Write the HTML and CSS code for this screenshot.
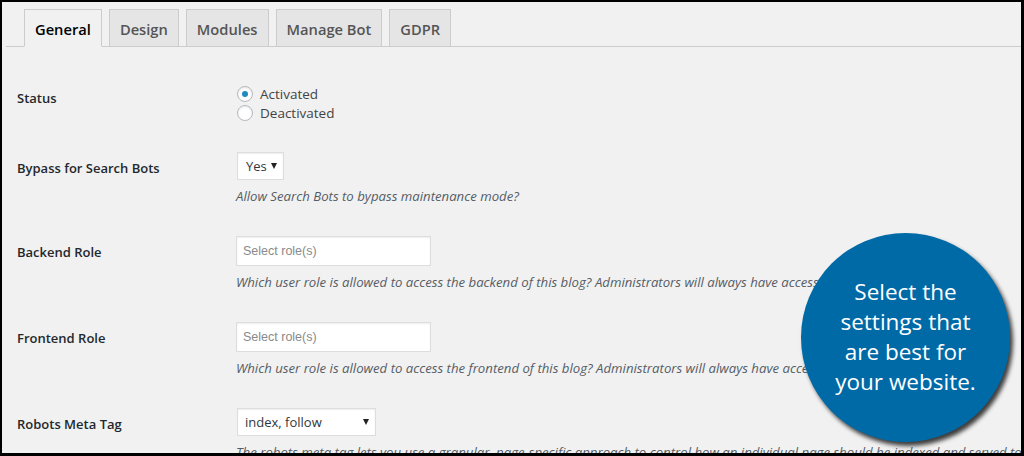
FILE: index.html
```html
<!DOCTYPE html>
<html lang="en">
<head>
<meta charset="utf-8">
<title>Settings</title>
<link rel="stylesheet" href="styles.css">
</head>
<body>
<div class="page">
  <nav class="tabs">
    <span class="tab active">General</span>
    <span class="tab">Design</span>
    <span class="tab">Modules</span>
    <span class="tab">Manage Bot</span>
    <span class="tab">GDPR</span>
  </nav>

  <div class="form">
    <div class="row">
      <div class="label">Status</div>
      <div class="field">
        <label class="radio"><span class="dot checked"></span>Activated</label>
        <label class="radio"><span class="dot"></span>Deactivated</label>
      </div>
    </div>

    <div class="row">
      <div class="label label-input">Bypass for Search Bots</div>
      <div class="field">
        <div class="select select-yes"><span>Yes</span><span class="caret"></span></div>
        <p class="desc">Allow Search Bots to bypass maintenance mode?</p>
      </div>
    </div>

    <div class="row">
      <div class="label label-input">Backend Role</div>
      <div class="field">
        <div class="input">Select role(s)</div>
        <p class="desc">Which user role is allowed to access the backend of this blog? Administrators will always have access to the backend.</p>
      </div>
    </div>

    <div class="row">
      <div class="label label-input">Frontend Role</div>
      <div class="field">
        <div class="input">Select role(s)</div>
        <p class="desc">Which user role is allowed to access the frontend of this blog? Administrators will always have access to the frontend.</p>
      </div>
    </div>

    <div class="row">
      <div class="label label-input">Robots Meta Tag</div>
      <div class="field">
        <div class="select select-robots"><span>index, follow</span><span class="caret"></span></div>
        <p class="desc">The robots meta tag lets you use a granular, page-specific approach to control how an individual page should be indexed and served to users in search engine results.</p>
      </div>
    </div>
  </div>

  <div class="bubble">
    <p>Select the<br>settings that<br>are best for<br>your website.</p>
  </div>
</div>
</body>
</html>
```

FILE: styles.css
```css
html, body {
  margin: 0;
  padding: 0;
  background: #000;
}

body {
  width: 1024px;
  height: 456px;
  overflow: hidden;
  font-family: "Open Sans", "Noto Sans", sans-serif;
}

.page {
  position: relative;
  margin: 2px 3px 0 2px;
  height: 451px;
  overflow: hidden;
  background: #f1f1f1;
}

/* Tabs */
.tabs {
  display: flex;
  align-items: flex-end;
  margin-left: 4px;
  padding: 7px 0 0 18px;
  border-bottom: 1px solid #ccc;
}

.tab {
  display: block;
  margin: 0 7px -1px 0;
  padding: 7px 10px 5px;
  line-height: 24px;
  font-size: 14.7px;
  font-weight: 600;
  color: #555;
  background: #e5e5e5;
  border: 1px solid #ccc;
}

.tab.active {
  color: #000;
  background: #f1f1f1;
  border-bottom-color: #f1f1f1;
}

/* Form */
.form {
  margin-top: 22px;
  padding-left: 15px;
}

.row {
  display: grid;
  grid-template-columns: 219px 1fr;
}

.label {
  padding-top: 20px;
  font-size: 13px;
  font-weight: 600;
  line-height: 18px;
  color: #23282d;
}

.label-input {
  padding-top: 22px;
}

.field {
  padding: 15px 0;
  min-width: 0;
}

.radio {
  display: flex;
  align-items: center;
  height: 19px;
  font-size: 13.5px;
  color: #444;
}

.dot {
  box-sizing: border-box;
  width: 16px;
  height: 16px;
  margin: 0 7px 0 1px;
  border: 1px solid #b4b9be;
  border-radius: 50%;
  background: #fff;
  box-shadow: inset 0 1px 2px rgba(0, 0, 0, 0.1);
  display: flex;
  align-items: center;
  justify-content: center;
}

.dot.checked::after {
  content: "";
  width: 6px;
  height: 6px;
  border-radius: 50%;
  background: #1e8cbe;
}

.select {
  box-sizing: border-box;
  display: flex;
  align-items: center;
  justify-content: space-between;
  height: 28px;
  margin-left: 1px;
  padding: 0 6px 0 8px;
  background: #fff;
  border: 1px solid #ddd;
  box-shadow: inset 0 1px 2px rgba(0, 0, 0, 0.07);
  font-size: 13px;
  color: #32373c;
}

.select-yes {
  width: 47px;
}

.select-robots {
  width: 139px;
  padding-left: 7px;
}

.caret {
  width: 0;
  height: 0;
  border-left: 3px solid transparent;
  border-right: 3px solid transparent;
  border-top: 6px solid #222;
}

.input {
  box-sizing: border-box;
  width: 195px;
  height: 30px;
  padding: 0 6px;
  display: flex;
  align-items: center;
  background: #fff;
  border: 1px solid #ddd;
  box-shadow: inset 0 1px 2px rgba(0, 0, 0, 0.07);
  font-family: "Liberation Sans", Arial, sans-serif;
  font-size: 12.5px;
  color: #8a8a8a;
}

.desc {
  margin: 7px 0 0;
  line-height: 19px;
  font-size: 13.2px;
  font-style: italic;
  color: #555d66;
  white-space: nowrap;
}

/* Callout bubble */
.bubble {
  position: absolute;
  left: 799px;
  top: 231px;
  width: 209px;
  height: 209px;
  border-radius: 50%;
  background: #006aa7;
  box-shadow: 3px 4px 4px rgba(0, 0, 0, 0.75);
  display: flex;
  align-items: center;
  justify-content: center;
}

.bubble p {
  margin: 0 0 2px;
  text-align: center;
  color: #fff;
  font-size: 22.5px;
  line-height: 30px;
}
```
